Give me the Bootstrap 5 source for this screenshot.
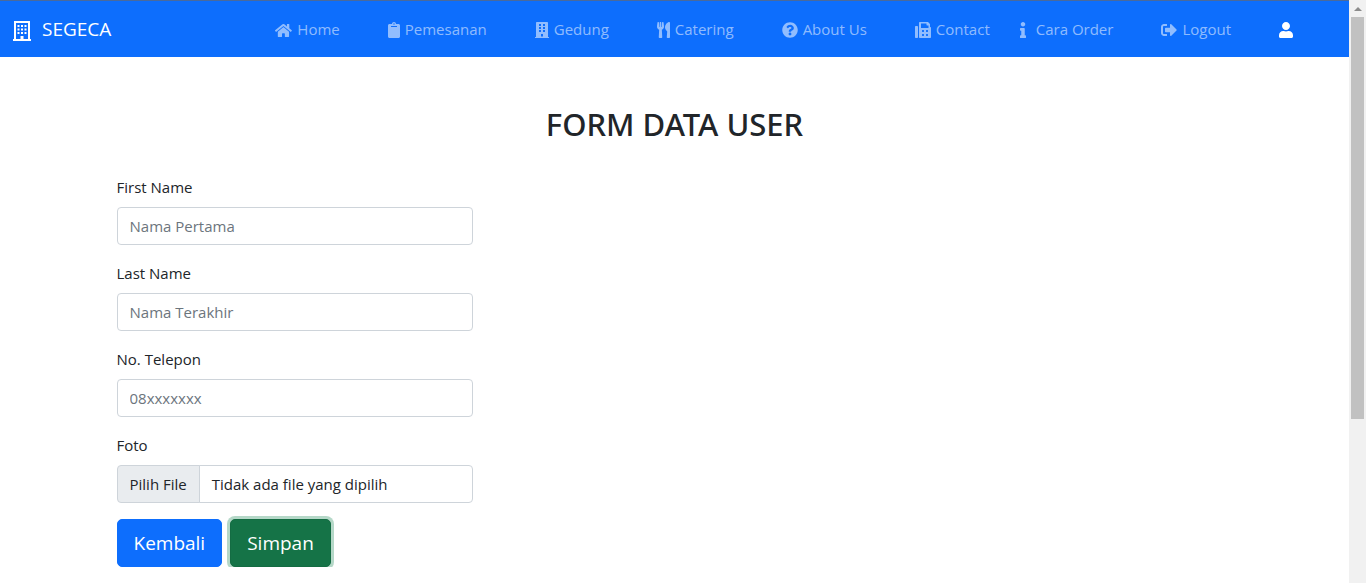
<!DOCTYPE html>
<html lang="id">
<head>
<meta charset="utf-8">
<meta name="viewport" content="width=device-width, initial-scale=1">
<title>SEGECA - Form Data User</title>
<link href="https://cdn.jsdelivr.net/npm/bootstrap@5.3.0/dist/css/bootstrap.min.css" rel="stylesheet">
<style>
  body { font-family: "Open Sans", "Noto Sans", sans-serif; font-size: 15px; line-height: 24px; color: #212529; }
  .page-shell { border-top: 1px solid #4a6a9c; }
  .site-nav { min-height: 56px; background: #0d6efd; }
  .site-nav .navbar-brand { font-size: 19px; line-height: 30px; gap: 10px; }
  .site-nav .navbar-brand svg { margin-top: 4px; }
  .site-nav .navbar-nav { gap: 14px; margin-right: 36px; }
  .site-nav .nav-link { display: flex; align-items: center; gap: 5px; color: rgba(255,255,255,.55); }
  .site-nav .nav-link.active { color: #fff; }
  .site-nav .nav-link svg { height: 16px; fill: currentColor; margin-top: 2px; }
  .site-nav .nav-link .home-icon { height: 15px; }
  .site-nav .info-link { gap: 10px; }
  .page-title { font-family: "Noto Sans", "Open Sans", sans-serif; font-size: 31px; line-height: 38px; font-weight: 500; margin-bottom: 32px; }
  .form-control, .input-group-text { font-size: 15px; line-height: 24px; border-color: #ced4da; border-radius: 4px; }
  .form-control::placeholder { color: #6c757d; opacity: 1; }
  .input-group-text { background: #e9ecef; cursor: pointer; }
  .btn-lg { font-size: 19px; line-height: 30px; border-radius: 5px; }
  .btn-save, .btn-save:hover, .btn-save:focus { background: #157347; border-color: #146c43; color: #fff; box-shadow: 0 0 0 3px #b5d8c8; }
  .scroll-rail { width: 17px; background: #f1f1f1; }
  .scroll-rail .arrow-cell { height: 17px; }
  .scroll-rail .rail-thumb { width: 13px; height: 69%; background: #c1c1c1; }
  @media (min-width: 768px) { .page-shell { margin-right: 17px; } }
  @media (min-width: 992px) { .nav-spaced { margin-left: 18px; } }
</style>
</head>
<body>
<div class="page-shell">
  <nav class="navbar navbar-expand-lg navbar-dark site-nav p-0">
    <div class="container-fluid">
      <a class="navbar-brand d-flex align-items-center" href="#">
        <svg width="20" height="20" viewBox="0 0 20 20" fill="#fff" fill-rule="evenodd" aria-hidden="true"><path d="M2 0h16v18h1v2H1v-2h1zM4 2v16h4.500v-3h3v3H16V2zM5.500 4h2v2h-2zM9 4h2v2H9zM12.500 4h2v2h-2zM5.500 7.500h2v2h-2zM9 7.500h2v2H9zM12.500 7.500h2v2h-2zM5.500 11h2v2h-2zM9 11h2v2H9zM12.500 11h2v2h-2z"/></svg>
        SEGECA
      </a>
      <button class="navbar-toggler" type="button" data-bs-toggle="collapse" data-bs-target="#menu" aria-controls="menu" aria-label="Menu"><span class="navbar-toggler-icon"></span></button>
      <div class="collapse navbar-collapse" id="menu">
        <ul class="navbar-nav ms-auto">
          <li class="nav-item"><a class="nav-link" href="#"><svg class="home-icon" viewBox="0 0 576 512" aria-hidden="true"><path d="M280.370 148.260L96 300.110V464a16 16 0 0 0 16 16l112.060-.29a16 16 0 0 0 15.920-16V368a16 16 0 0 1 16-16h64a16 16 0 0 1 16 16v95.640a16 16 0 0 0 16 16.050L464 480a16 16 0 0 0 16-16V300L295.670 148.260a12.190 12.190 0 0 0-15.300 0zM571.600 251.470L488 182.560V44.050a12 12 0 0 0-12-12h-56a12 12 0 0 0-12 12v72.610L318.470 43a48 48 0 0 0-61 0L4.340 251.470a12 12 0 0 0-1.600 16.900l25.500 31A12 12 0 0 0 45.150 301l235.220-193.740a12.190 12.190 0 0 1 15.300 0L530.900 301a12 12 0 0 0 16.900-1.600l25.500-31a12 12 0 0 0-1.700-16.930z"/></svg>Home</a></li>
          <li class="nav-item nav-spaced"><a class="nav-link" href="#"><svg viewBox="0 0 384 512" aria-hidden="true"><path fill-rule="evenodd" d="M384 112v352c0 26.510-21.490 48-48 48H48c-26.510 0-48-21.490-48-48V112c0-26.510 21.490-48 48-48h80c0-35.290 28.710-64 64-64s64 28.710 64 64h80c26.510 0 48 21.490 48 48zM192 40c-13.255 0-24 10.745-24 24s10.745 24 24 24 24-10.745 24-24-10.745-24-24-24m96 114v-20a6 6 0 0 0-6-6H102a6 6 0 0 0-6 6v20a6 6 0 0 0 6 6h180a6 6 0 0 0 6-6z"/></svg>Pemesanan</a></li>
          <li class="nav-item nav-spaced"><a class="nav-link" href="#"><svg viewBox="0 0 448 512" fill-rule="evenodd" aria-hidden="true"><path d="M436 480h-20V24c0-13-11-24-24-24H56C43 0 32 11 32 24v456H12c-7 0-12 5-12 12v20h448v-20c0-7-5-12-12-12zM128 64h64v64h-64zM256 64h64v64h-64zM128 160h64v64h-64zM256 160h64v64h-64zM128 256h64v64h-64zM256 256h64v64h-64zM192 384h64v80h-64z"/></svg>Gedung</a></li>
          <li class="nav-item nav-spaced"><a class="nav-link" href="#"><svg viewBox="0 0 416 512" aria-hidden="true"><path d="M207.900 15.200c.8 4.700 16.100 94.500 16.100 128.800 0 52.300-27.800 89.600-68.900 104.600L168 486.700c.7 13.700-10.200 25.300-24 25.300H80c-13.700 0-24.700-11.500-24-25.300l12.900-238.100C27.700 233.600 0 196.200 0 144 0 109.600 15.300 19.900 16.100 15.200 19.300-5.100 61.400-5.400 64 16.300v141.200c1.300 3.400 15.100 3.200 16 0 1.400-25.300 7.900-139.200 8-141.800 3.300-20.800 44.700-20.800 47.900 0 .2 2.700 6.600 116.500 8 141.800.9 3.200 14.800 3.400 16 0V16.300c2.600-21.600 44.800-21.400 47.900-1.100zm119.200 285.700l-15 185.100c-1.200 14 9.900 26 23.900 26h56c13.300 0 24-10.700 24-24V24c0-13.200-10.700-24-24-24-82.500 0-221.400 178.500-64.900 300.900z"/></svg>Catering</a></li>
          <li class="nav-item nav-spaced"><a class="nav-link" href="#"><svg viewBox="0 0 512 512" aria-hidden="true"><path fill-rule="evenodd" d="M504 256c0 136.997-111.043 248-248 248S8 392.997 8 256C8 119.083 119.043 8 256 8s248 111.083 248 248zM262.655 90c-54.497 0-89.255 22.957-116.549 63.758-3.536 5.286-2.353 12.415 2.715 16.258l34.699 26.310c5.205 3.947 12.621 3.008 16.665-2.122 17.864-22.658 30.113-35.797 57.303-35.797 20.429 0 45.698 13.148 45.698 32.958 0 14.976-12.363 22.667-32.534 33.976C247.128 238.528 216 254.941 216 296v4c0 6.627 5.373 12 12 12h56c6.627 0 12-5.373 12-12v-1.333c0-28.462 83.186-29.647 83.186-106.667 0-58.002-60.165-102-116.531-102zM256 338c-25.365 0-46 20.635-46 46 0 25.364 20.635 46 46 46s46-20.636 46-46c0-25.365-20.635-46-46-46z"/></svg>About Us</a></li>
          <li class="nav-item nav-spaced"><a class="nav-link" href="#"><svg viewBox="0 0 512 512" aria-hidden="true"><path fill-rule="evenodd" d="M64 128H32c-18 0-32 14-32 32v320c0 18 14 32 32 32h32c18 0 32-14 32-32V160c0-18-14-32-32-32zm416 32V77c0-8-3-16-9-22L425 9c-6-6-14-9-22-9H160c-18 0-32 14-32 32v448c0 18 14 32 32 32h320c18 0 32-14 32-32V192c0-18-14-32-32-32zM224 272c0-9 7-16 16-16h32c9 0 16 7 16 16v32c0 9-7 16-16 16h-32c-9 0-16-7-16-16zM352 272c0-9 7-16 16-16h32c9 0 16 7 16 16v32c0 9-7 16-16 16h-32c-9 0-16-7-16-16zM224 400c0-9 7-16 16-16h32c9 0 16 7 16 16v32c0 9-7 16-16 16h-32c-9 0-16-7-16-16zM352 400c0-9 7-16 16-16h32c9 0 16 7 16 16v32c0 9-7 16-16 16h-32c-9 0-16-7-16-16zM432 192H192V48h176v48c0 9 7 16 16 16h48z"/></svg>Contact</a></li>
          <li class="nav-item"><a class="nav-link info-link" href="#"><svg viewBox="0 0 192 512" aria-hidden="true"><path d="M20 424.229h20V279.771H20c-11.046 0-20-8.954-20-20V212c0-11.046 8.954-20 20-20h112c11.046 0 20 8.954 20 20v212.229h20c11.046 0 20 8.954 20 20V492c0 11.046-8.954 20-20 20H20c-11.046 0-20-8.954-20-20v-47.771c0-11.046 8.954-20 20-20zM96 0C56.235 0 24 32.235 24 72s32.235 72 72 72 72-32.235 72-72S135.764 0 96 0z"/></svg>Cara Order</a></li>
          <li class="nav-item nav-spaced"><a class="nav-link" href="#"><svg viewBox="0 0 512 512" aria-hidden="true"><path d="M497 273L329 441c-15 15-41 4.500-41-17v-96H152c-13.300 0-24-10.700-24-24v-96c0-13.300 10.700-24 24-24h136V88c0-21.400 25.900-32 41-17l168 168c9.300 9.400 9.300 24.600 0 34zM192 436v-40c0-6.600-5.400-12-12-12H96c-17.700 0-32-14.300-32-32V160c0-17.700 14.300-32 32-32h84c6.600 0 12-5.400 12-12V76c0-6.600-5.400-12-12-12H96c-53 0-96 43-96 96v192c0 53 43 96 96 96h84c6.600 0 12-5.400 12-12z"/></svg>Logout</a></li>
          <li class="nav-item nav-spaced d-flex"><a class="nav-link active" href="#" aria-label="Profil"><svg viewBox="0 0 448 512" aria-hidden="true"><path d="M224 256c70.700 0 128-57.300 128-128S294.700 0 224 0 96 57.300 96 128s57.300 128 128 128zm89.600 32h-16.700c-22.200 10.200-46.900 16-72.900 16s-50.600-5.800-72.900-16h-16.700C60.200 288 0 348.200 0 422.400V464c0 26.500 21.500 48 48 48h352c26.500 0 48-21.500 48-48v-41.600c0-74.200-60.200-134.400-134.400-134.400z"/></svg></a></li>
        </ul>
      </div>
    </div>
  </nav>

  <main class="container mt-5">
    <h2 class="page-title text-center">FORM DATA USER</h2>
    <form class="row">
      <div class="col-md-6 col-lg-4">
        <div class="mb-3">
          <label class="form-label" for="first">First Name</label>
          <input class="form-control" type="text" id="first" placeholder="Nama Pertama">
        </div>
        <div class="mb-3">
          <label class="form-label" for="last">Last Name</label>
          <input class="form-control" type="text" id="last" placeholder="Nama Terakhir">
        </div>
        <div class="mb-3">
          <label class="form-label" for="phone">No. Telepon</label>
          <input class="form-control" type="tel" id="phone" placeholder="08xxxxxxx">
        </div>
        <div class="mb-3">
          <label class="form-label" for="foto">Foto</label>
          <div class="input-group">
            <label class="input-group-text" for="foto">Pilih File</label>
            <span class="form-control">Tidak ada file yang dipilih</span>
          </div>
          <input class="visually-hidden" type="file" id="foto">
        </div>
        <div class="d-flex gap-2">
          <button class="btn btn-primary btn-lg" type="button">Kembali</button>
          <button class="btn btn-lg btn-save" type="submit">Simpan</button>
        </div>
      </div>
    </form>
  </main>
</div>

<div class="scroll-rail position-fixed top-0 end-0 h-100 d-none d-md-flex flex-column align-items-center" aria-hidden="true">
  <div class="arrow-cell d-flex align-items-center"><svg width="8" height="4" viewBox="0 0 8 4"><path d="M4 0l4 4H0z" fill="#8b8b8b"/></svg></div>
  <div class="rail-thumb"></div>
</div>
<script src="https://cdn.jsdelivr.net/npm/bootstrap@5.3.0/dist/js/bootstrap.bundle.min.js"></script>
</body>
</html>
